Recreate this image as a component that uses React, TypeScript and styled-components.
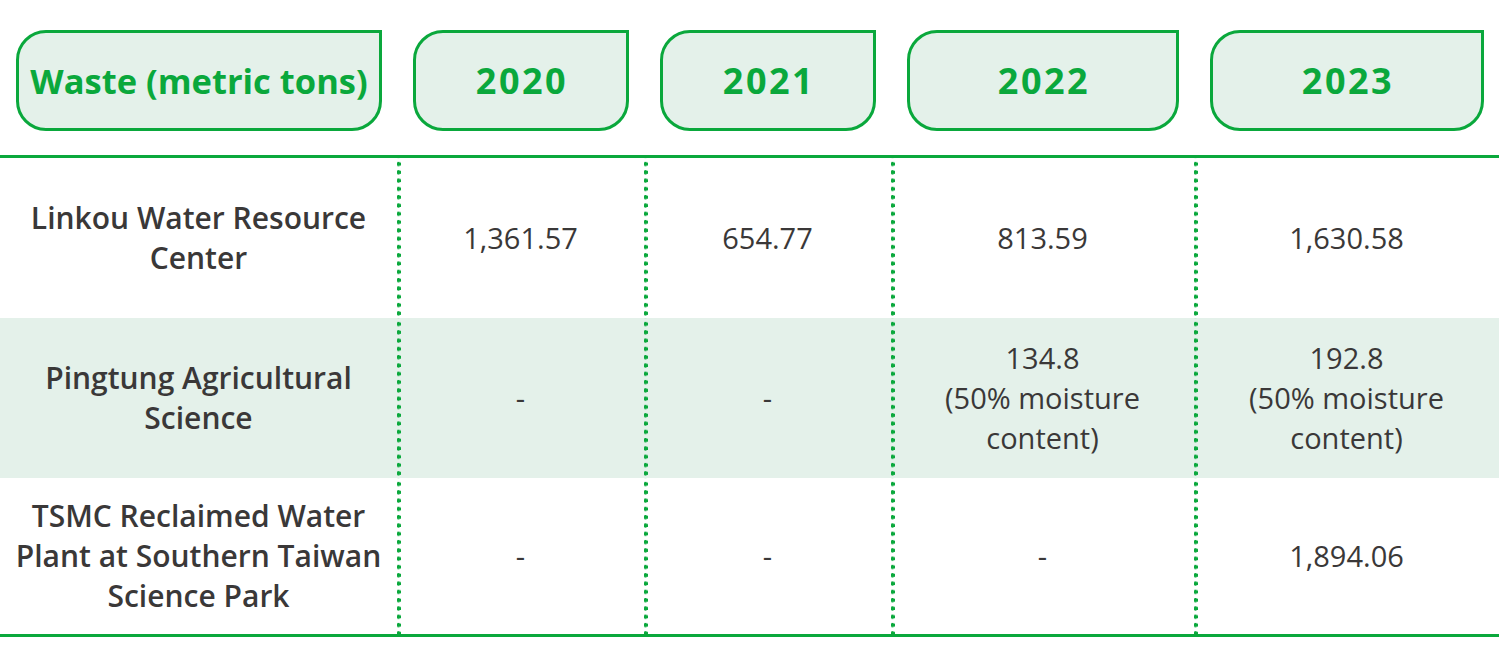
import React from "react";
import styled, { createGlobalStyle } from "styled-components";

const GREEN = "#0aa83c";
const TINT = "#e4f1ea";
const INK = "#3a3838";

const Global = createGlobalStyle`
  html, body { margin: 0; padding: 0; background: #ffffff; }
  body { font-family: "Open Sans", "Noto Sans", sans-serif; }
`;

const COLS = "397px 247px 247px 303px 305px";

const Table = styled.div`
  width: 1499px;
  display: flex;
  flex-direction: column;
`;

const HeaderRow = styled.div`
  display: grid;
  grid-template-columns: ${COLS};
  height: 155px;
  border-bottom: 3px solid ${GREEN};
`;

const HeaderCell = styled.div`
  padding: 30px 15px 0 16px;
  box-sizing: border-box;
`;

const Pill = styled.div<{ $year?: boolean }>`
  height: 101px;
  box-sizing: border-box;
  border: 3px solid ${GREEN};
  border-radius: 30px 0 30px 30px;
  background: ${TINT};
  display: flex;
  align-items: center;
  justify-content: center;
  color: ${GREEN};
  font-weight: 700;
  font-size: ${(p) => (p.$year ? "36px" : "34.5px")};
  letter-spacing: ${(p) => (p.$year ? "2.5px" : "0")};
  padding-left: ${(p) => (p.$year ? "2px" : "0")};
`;

const Row = styled.div<{ $shaded?: boolean; $last?: boolean }>`
  display: grid;
  grid-template-columns: ${COLS};
  height: ${(p) => (p.$last ? "159px" : "160px")};
  background: ${(p) => (p.$shaded ? TINT : "transparent")};
  border-bottom: ${(p) => (p.$last ? `3px solid ${GREEN}` : "none")};
  box-sizing: border-box;
`;

const Cell = styled.div<{ $label?: boolean; $divider?: boolean }>`
  display: flex;
  align-items: center;
  justify-content: center;
  text-align: center;
  color: ${INK};
  font-size: ${(p) => (p.$label ? "30px" : "29px")};
  line-height: 40px;
  font-weight: ${(p) => (p.$label ? 600 : 400)};
  background-image: ${(p) =>
    p.$divider
      ? `radial-gradient(circle at 2px 4px, ${GREEN} 1.9px, transparent 2.4px)`
      : "none"};
  background-size: 4px 8.3px;
  background-repeat: repeat-y;
  background-position: -0.5px 2px;
`;

type RowData = { label: React.ReactNode; values: React.ReactNode[]; shaded?: boolean };

const moisture = (n: string) => (
  <>
    {n}
    <br />
    (50% moisture
    <br />
    content)
  </>
);

const rows: RowData[] = [
  {
    label: (
      <>
        Linkou Water Resource
        <br />
        Center
      </>
    ),
    values: ["1,361.57", "654.77", "813.59", "1,630.58"],
  },
  {
    label: (
      <>
        Pingtung Agricultural
        <br />
        Science
      </>
    ),
    values: ["-", "-", moisture("134.8"), moisture("192.8")],
    shaded: true,
  },
  {
    label: (
      <>
        TSMC Reclaimed Water
        <br />
        Plant at Southern Taiwan
        <br />
        Science Park
      </>
    ),
    values: ["-", "-", "-", "1,894.06"],
  },
];

const headers = ["Waste (metric tons)", "2020", "2021", "2022", "2023"];

export default function App() {
  return (
    <>
      <Global />
      <Table>
        <HeaderRow>
          {headers.map((h, i) => (
            <HeaderCell key={h}>
              <Pill $year={i > 0}>{h}</Pill>
            </HeaderCell>
          ))}
        </HeaderRow>
        {rows.map((r, i) => (
          <Row key={i} $shaded={r.shaded} $last={i === rows.length - 1}>
            <Cell $label>
              <span>{r.label}</span>
            </Cell>
            {r.values.map((v, j) => (
              <Cell key={j} $divider>
                <span>{v}</span>
              </Cell>
            ))}
          </Row>
        ))}
      </Table>
    </>
  );
}
